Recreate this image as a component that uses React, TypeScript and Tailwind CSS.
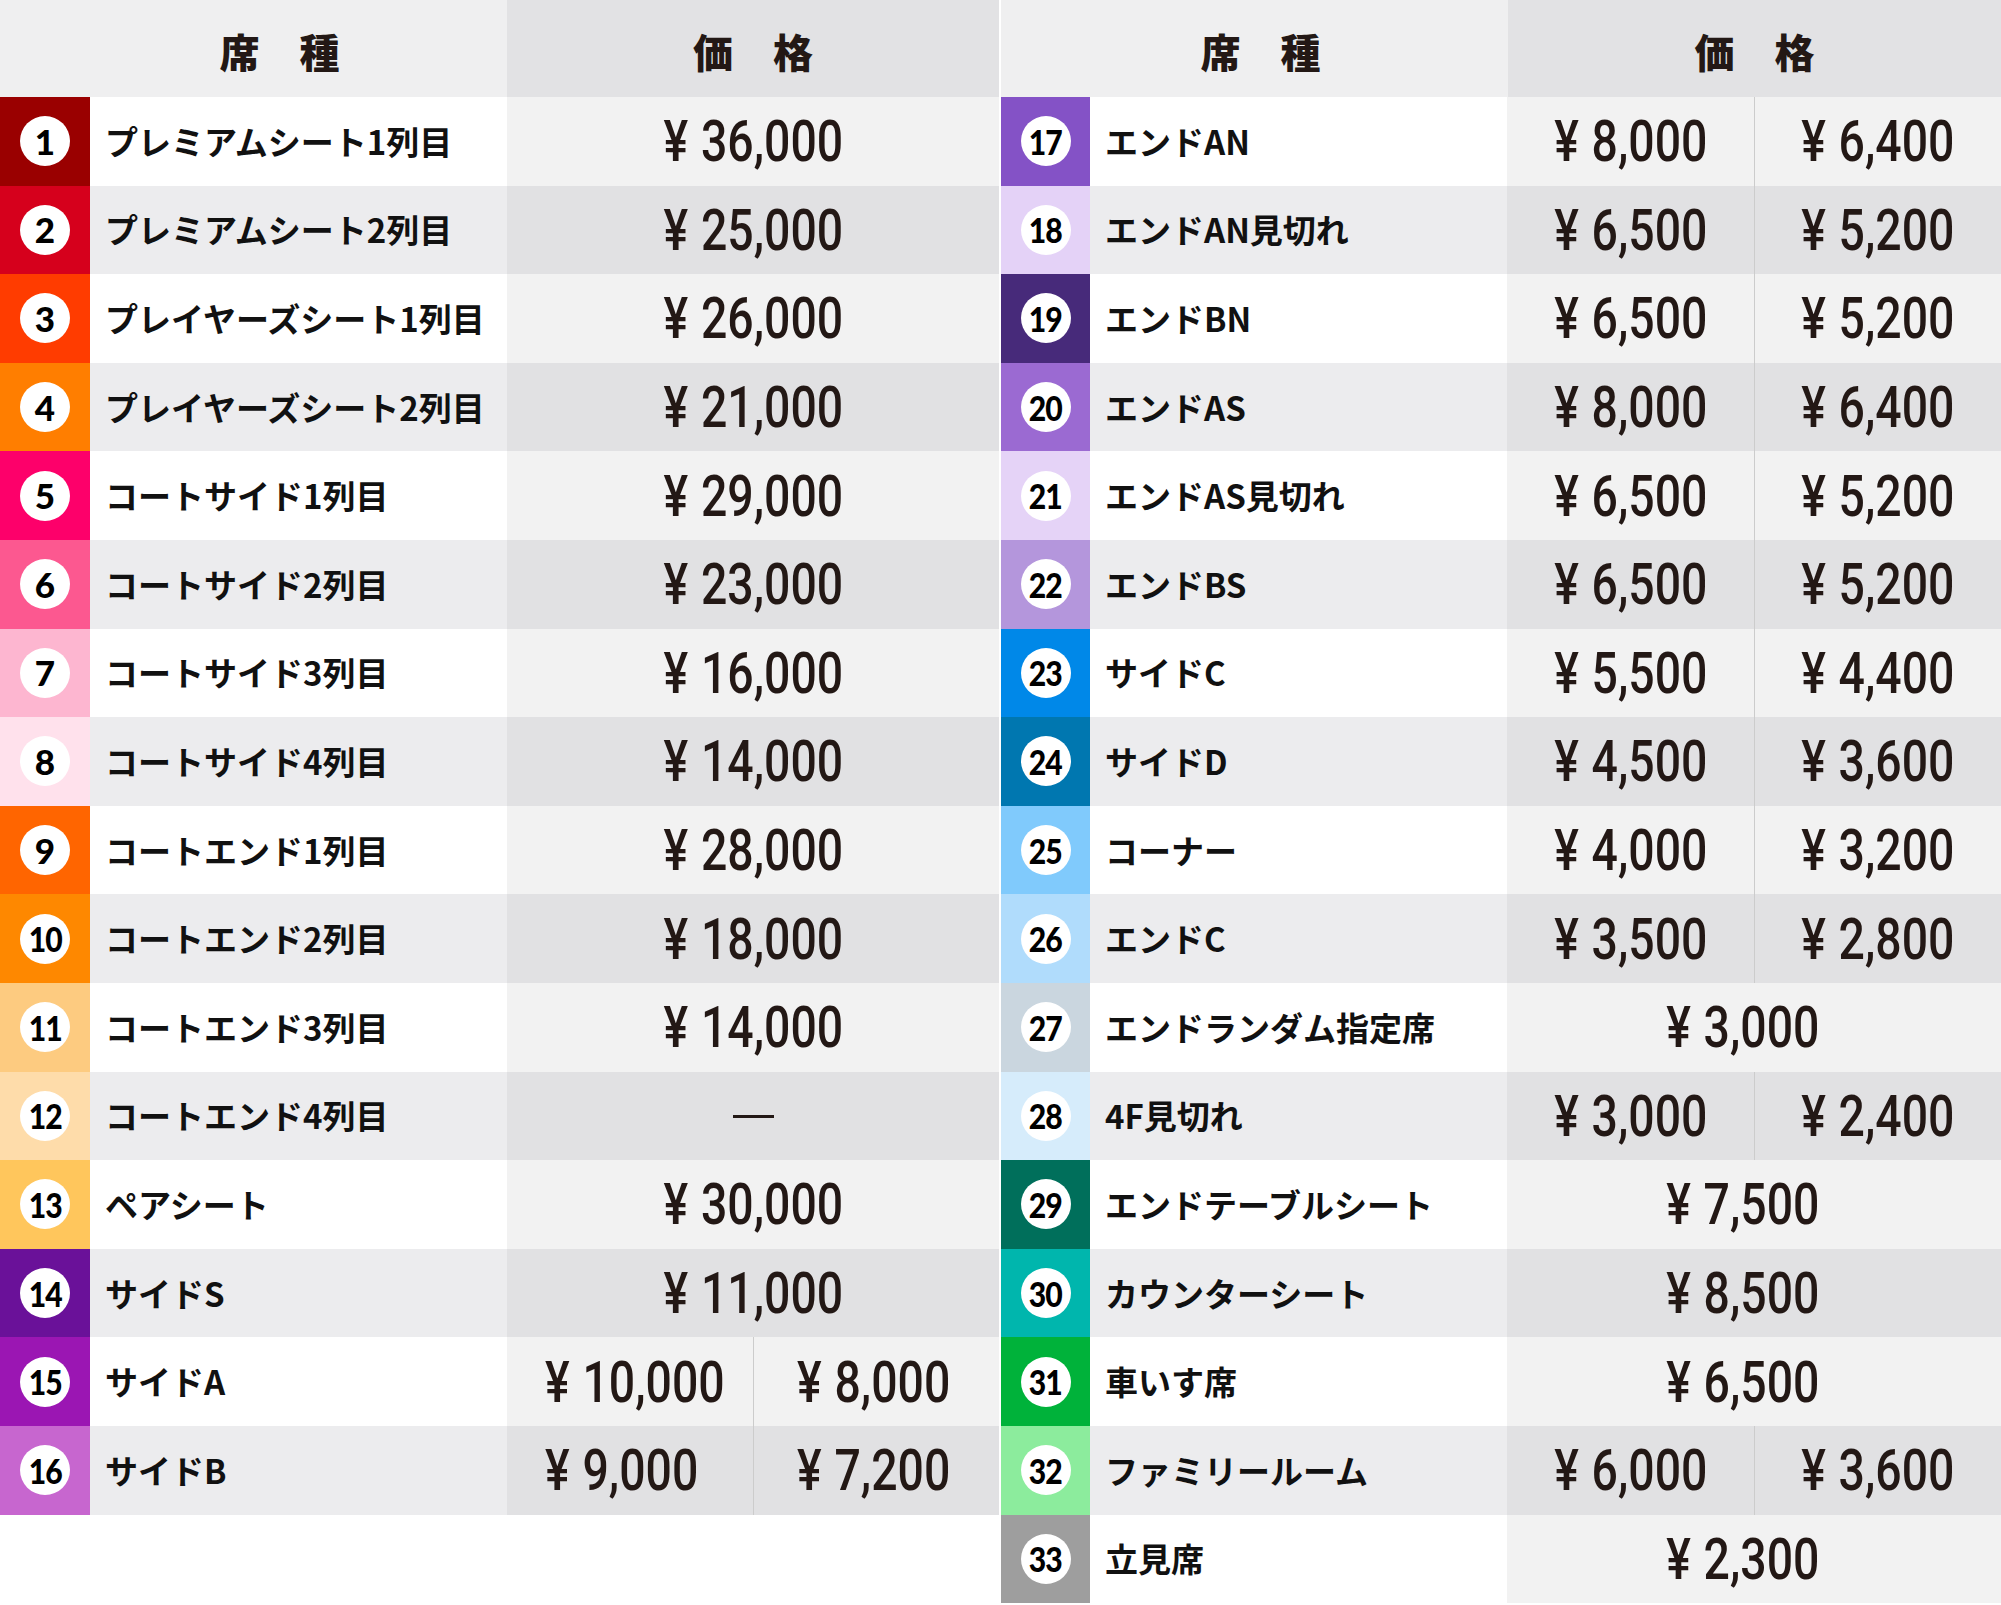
import React from "react";

type Seat = { n: number; bg: string; name: string; prices: string[] };

const left: Seat[] = [
  { n: 1, bg: "bg-[#9a0000]", name: "プレミアムシート1列目", prices: ["36,000"] },
  { n: 2, bg: "bg-[#d6001c]", name: "プレミアムシート2列目", prices: ["25,000"] },
  { n: 3, bg: "bg-[#ff3c00]", name: "プレイヤーズシート1列目", prices: ["26,000"] },
  { n: 4, bg: "bg-[#ff7e00]", name: "プレイヤーズシート2列目", prices: ["21,000"] },
  { n: 5, bg: "bg-[#fd006a]", name: "コートサイド1列目", prices: ["29,000"] },
  { n: 6, bg: "bg-[#fc5890]", name: "コートサイド2列目", prices: ["23,000"] },
  { n: 7, bg: "bg-[#fdb6d0]", name: "コートサイド3列目", prices: ["16,000"] },
  { n: 8, bg: "bg-[#ffe1ec]", name: "コートサイド4列目", prices: ["14,000"] },
  { n: 9, bg: "bg-[#ff6500]", name: "コートエンド1列目", prices: ["28,000"] },
  { n: 10, bg: "bg-[#fe8800]", name: "コートエンド2列目", prices: ["18,000"] },
  { n: 11, bg: "bg-[#fdcb80]", name: "コートエンド3列目", prices: ["14,000"] },
  { n: 12, bg: "bg-[#fedcaa]", name: "コートエンド4列目", prices: ["-"] },
  { n: 13, bg: "bg-[#ffc65c]", name: "ペアシート", prices: ["30,000"] },
  { n: 14, bg: "bg-[#6a1199]", name: "サイドS", prices: ["11,000"] },
  { n: 15, bg: "bg-[#9b16b3]", name: "サイドA", prices: ["10,000", "8,000"] },
  { n: 16, bg: "bg-[#c766cf]", name: "サイドB", prices: ["9,000", "7,200"] },
];

const right: Seat[] = [
  { n: 17, bg: "bg-[#8452c6]", name: "エンドAN", prices: ["8,000", "6,400"] },
  { n: 18, bg: "bg-[#e4d2f7]", name: "エンドAN見切れ", prices: ["6,500", "5,200"] },
  { n: 19, bg: "bg-[#472a7a]", name: "エンドBN", prices: ["6,500", "5,200"] },
  { n: 20, bg: "bg-[#9b6ad2]", name: "エンドAS", prices: ["8,000", "6,400"] },
  { n: 21, bg: "bg-[#e5d3f7]", name: "エンドAS見切れ", prices: ["6,500", "5,200"] },
  { n: 22, bg: "bg-[#b496dc]", name: "エンドBS", prices: ["6,500", "5,200"] },
  { n: 23, bg: "bg-[#0088e8]", name: "サイドC", prices: ["5,500", "4,400"] },
  { n: 24, bg: "bg-[#0077b0]", name: "サイドD", prices: ["4,500", "3,600"] },
  { n: 25, bg: "bg-[#80cafc]", name: "コーナー", prices: ["4,000", "3,200"] },
  { n: 26, bg: "bg-[#b0dcfc]", name: "エンドC", prices: ["3,500", "2,800"] },
  { n: 27, bg: "bg-[#cad6df]", name: "エンドランダム指定席", prices: ["3,000"] },
  { n: 28, bg: "bg-[#d6ecfb]", name: "4F見切れ", prices: ["3,000", "2,400"] },
  { n: 29, bg: "bg-[#006f5b]", name: "エンドテーブルシート", prices: ["7,500"] },
  { n: 30, bg: "bg-[#00b6ad]", name: "カウンターシート", prices: ["8,500"] },
  { n: 31, bg: "bg-[#00b23a]", name: "車いす席", prices: ["6,500"] },
  { n: 32, bg: "bg-[#8cec9d]", name: "ファミリールーム", prices: ["6,000", "3,600"] },
  { n: 33, bg: "bg-[#9e9e9e]", name: "立見席", prices: ["2,300"] },
];

const jp = "font-['Noto_Sans_CJK_JP',sans-serif]";

function Price({ value, start }: { value: string; start?: boolean }) {
  if (value === "-") {
    return <div className="mt-[2px] h-[3px] w-[41px] bg-[#231815]" />;
  }
  return (
    <span
      className={`inline-block whitespace-nowrap scale-x-[0.8] font-['Roboto',sans-serif] text-[58px] font-medium leading-none text-[#231815] ${
        start ? "origin-left" : ""
      }`}
    >
      ¥<span className="inline-block w-[16px]" />
      {value}
    </span>
  );
}

function Badge({ n }: { n: number }) {
  return (
    <div className="flex h-[50px] w-[50px] items-center justify-center rounded-full bg-white">
      <span
        className={
          n > 9
            ? "inline-block scale-x-[0.86] font-['Lato',sans-serif] text-[35px] font-black leading-none tracking-[-1px] text-black"
            : "inline-block font-['Lato',sans-serif] text-[35px] font-black leading-none text-black"
        }
      >
        {n}
      </span>
    </div>
  );
}

function Table({ rows, side }: { rows: Seat[]; side: "left" | "right" }) {
  const isLeft = side === "left";
  return (
    <div className="flex flex-1 flex-col">
      <div className="grid h-[97px] grid-cols-[507px_1fr]">
        <div className={`flex items-center justify-center bg-[#efeff0] pt-[5px] ${isLeft ? "pl-[52px]" : "pl-[12px]"}`}>
          <span className={`${jp} text-[40px] font-black leading-none text-[#231815]`}>席　種</span>
        </div>
        <div className="flex items-center justify-center bg-[#e2e2e4] pt-[5px]">
          <span className={`${jp} text-[40px] font-black leading-none text-[#231815]`}>価　格</span>
        </div>
      </div>
      {rows.map((r, i) => {
        const even = i % 2 === 0;
        return (
          <div
            key={r.n}
            className={`grid h-[88.6px] ${isLeft ? "grid-cols-[90px_417px_1fr]" : "grid-cols-[89px_417px_1fr]"}`}
          >
            <div className={`flex items-center justify-center ${r.bg}`}>
              <Badge n={r.n} />
            </div>
            <div className={`flex items-center pl-[15px] ${even ? "bg-white" : "bg-[#ececee]"}`}>
              <span className={`${jp} whitespace-nowrap text-[33px] font-bold leading-none text-[#111]`}>
                {r.name}
              </span>
            </div>
            {r.prices.length === 1 ? (
              <div
                className={`flex items-center justify-center ${even ? "bg-[#f2f2f2]" : "bg-[#e1e1e3]"} ${
                  isLeft ? "" : "pr-[22px]"
                }`}
              >
                <Price value={r.prices[0]} />
              </div>
            ) : isLeft ? (
              <div className={`grid grid-cols-2 ${even ? "bg-[#f2f2f2]" : "bg-[#e1e1e3]"}`}>
                <div className="flex items-center pl-[38px]">
                  <Price value={r.prices[0]} start />
                </div>
                <div className="flex items-center border-l border-[#cccccc] pl-[43px]">
                  <Price value={r.prices[1]} start />
                </div>
              </div>
            ) : (
              <div className={`grid grid-cols-2 ${even ? "bg-[#f2f2f2]" : "bg-[#e1e1e3]"}`}>
                <div className="flex items-center justify-center">
                  <Price value={r.prices[0]} />
                </div>
                <div className="flex items-center justify-center border-l border-[#cccccc]">
                  <Price value={r.prices[1]} />
                </div>
              </div>
            )}
          </div>
        );
      })}
    </div>
  );
}

export default function App() {
  return (
    <div className="flex h-[1605px] w-[2001px] items-start gap-[2px] bg-white">
      <div className="flex w-[999px]">
        <Table rows={left} side="left" />
      </div>
      <div className="flex w-[1000px]">
        <Table rows={right} side="right" />
      </div>
    </div>
  );
}
